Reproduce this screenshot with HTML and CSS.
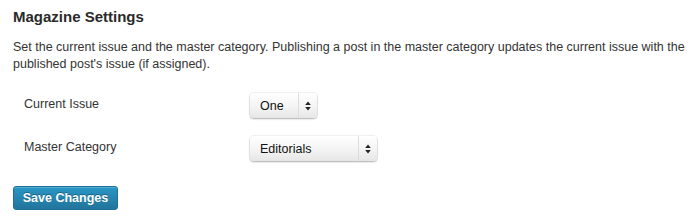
FILE: index.html
```html
<!DOCTYPE html>
<html>
  <head>
    <title>Magazine Settings</title>
    <link rel="stylesheet" href="styles.css">
  </head>
  <body>
    <div class="wrap">
      <h3 class="title">Magazine Settings</h3>
      <p class="intro">
        Set the current issue and the master category. Publishing a post in the master category updates the current issue with the
        published post's issue (if assigned).
      </p>

      <div class="form-table">
        <div class="row">
          <label class="label">Current Issue</label>
          <div class="select select-small">
            <span class="select-value">One</span>
            <span class="select-arrows">
              <svg width="6" height="10" viewBox="0 0 6 10"><path d="M3 0.5L5.8 4H0.2Z M3 9.5L0.2 6H5.8Z" fill="#222"/></svg>
            </span>
          </div>
        </div>
        <div class="row">
          <label class="label">Master Category</label>
          <div class="select select-wide">
            <span class="select-value">Editorials</span>
            <span class="select-arrows">
              <svg width="6" height="10" viewBox="0 0 6 10"><path d="M3 0.5L5.8 4H0.2Z M3 9.5L0.2 6H5.8Z" fill="#222"/></svg>
            </span>
          </div>
        </div>
      </div>

      <button class="button-primary">Save Changes</button>
    </div>
  </body>
</html>
```

FILE: styles.css
```css
body {
  margin: 0;
  background: #fff;
  color: #333;
  font-family: "Liberation Sans", Arial, sans-serif;
  font-size: 12.5px;
}
.wrap {
  padding: 7px 13px;
}
.title {
  margin: 0;
  font-size: 15px;
  font-weight: bold;
  line-height: 20px;
  color: #2a2a2a;
}
.intro {
  margin: 12px 0 0 0;
  line-height: 17px;
  width: 680px;
}
.form-table {
  margin-top: 11px;
  display: flex;
  flex-direction: column;
}
.row {
  display: flex;
  align-items: center;
  height: 43px;
}
.label {
  width: 226px;
  padding-left: 11px;
  padding-bottom: 2px;
  line-height: 17px;
}
.select {
  display: flex;
  align-items: center;
  height: 25px;
  box-sizing: border-box;
  border-radius: 4px;
  background: linear-gradient(#ffffff, #f4f4f4 55%, #e6e6e6);
  box-shadow: 0 0 0 1px rgba(0, 0, 0, 0.05), 0 1px 2px rgba(0, 0, 0, 0.28);
  color: #111;
}
.select-small {
  width: 67px;
}
.select-wide {
  width: 127px;
}
.select-value {
  flex: 1;
  padding-left: 10px;
}
.select-arrows {
  width: 18px;
  height: 25px;
  display: flex;
  align-items: center;
  justify-content: center;
  border-left: 1px solid #dcdcdc;
}
.button-primary {
  display: block;
  margin-top: 16px;
  width: 105px;
  height: 24px;
  padding: 0;
  border: 1px solid #1f6e93;
  border-radius: 3px;
  background: linear-gradient(#2a95c5, #21759b);
  color: #fff;
  font-family: "Liberation Sans", Arial, sans-serif;
  font-size: 12.5px;
  font-weight: bold;
  text-shadow: 0 -1px 0 rgba(0, 0, 0, 0.3);
  box-shadow: inset 0 1px 0 rgba(120, 200, 230, 0.5);
}
```
